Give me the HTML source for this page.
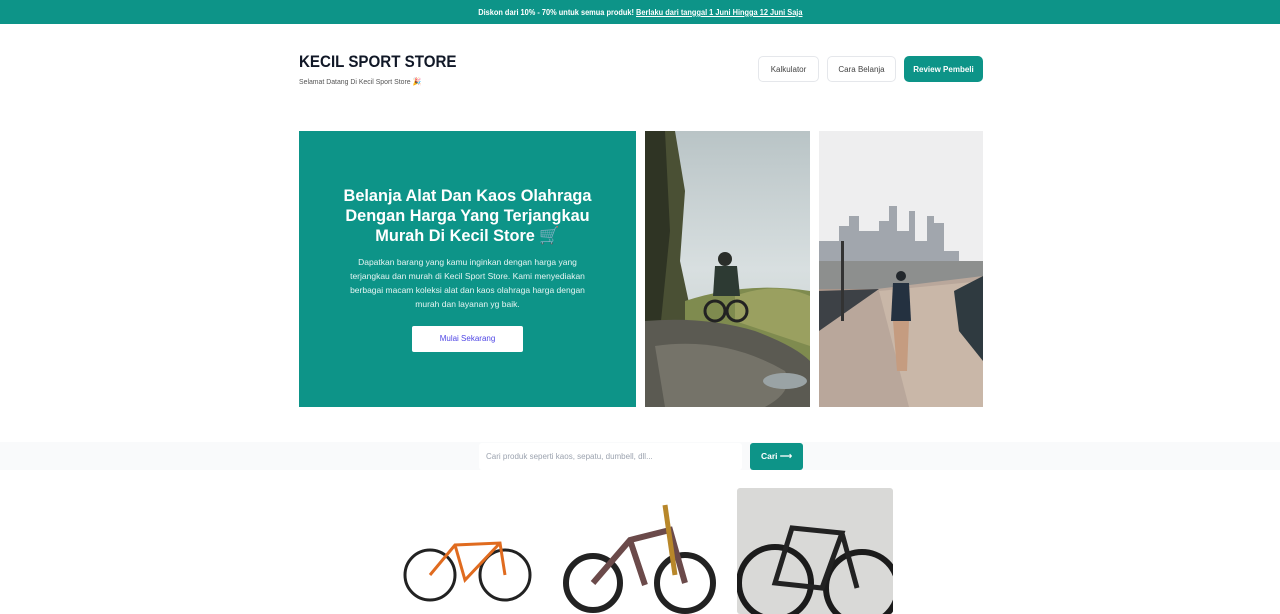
<!DOCTYPE html>
<html><head><meta charset="utf-8"><style>
*{margin:0;padding:0;box-sizing:border-box}
body{width:1280px;height:614px;overflow:hidden;background:#fff;font-family:"Liberation Sans",sans-serif;position:relative}
.top{height:24px;background:#0d9488;color:#fff;font-size:8.5px;font-weight:bold;text-align:center;line-height:24px}
.top span{display:inline-block;transform:scaleX(0.87)}
.top u{text-decoration:underline}
.abs{position:absolute}
h1{position:absolute;left:299px;top:52px;font-size:17px;font-weight:bold;color:#111827;transform:scaleX(0.89);transform-origin:left}
.sub{left:299px;top:77px;font-size:7.5px;color:#555;transform:scaleX(0.92);transform-origin:left}
.btn{position:absolute;top:56px;height:26px;border:1px solid #e5e7eb;border-radius:5px;font-size:8px;color:#444;display:flex;align-items:center;justify-content:center;background:#fff}
.hero{left:299px;top:131px;width:337px;height:276px;background:#0d9488;color:#fff;text-align:center}
.hero h2{font-size:17px;line-height:20px;font-weight:bold;margin-top:55px;padding:0 30px;transform:scaleX(0.96)}
.hero p{font-size:8.5px;line-height:14px;margin:9px 40px 0;color:#e6f5f3}
.hero .b{display:block;width:111px;height:26px;background:#fff;border-radius:2px;margin:15px auto 0;color:#4f46e5;font-size:8px;line-height:26px}
.sbar{left:0;top:442px;width:1280px;height:28px;background:#f9fafb}
</style></head><body>
<div class="top"><span>Diskon dari 10% - 70% untuk semua produk! <u>Berlaku dari tanggal 1 Juni Hingga 12 Juni Saja</u></span></div>
<h1>KECIL SPORT STORE</h1>
<div class="abs sub">Selamat Datang Di Kecil Sport Store 🎉</div>
<div class="btn" style="left:758px;width:61px">Kalkulator</div>
<div class="btn" style="left:827px;width:69px">Cara Belanja</div>
<div class="btn" style="left:904px;width:79px;background:#0d9488;border-color:#0d9488;color:#fff;font-weight:bold">Review Pembeli</div>
<div class="abs hero"><h2>Belanja Alat Dan Kaos Olahraga Dengan Harga Yang Terjangkau Murah Di Kecil Store 🛒</h2>
<p>Dapatkan barang yang kamu inginkan dengan harga yang terjangkau dan murah di Kecil Sport Store. Kami menyediakan berbagai macam koleksi alat dan kaos olahraga harga dengan murah dan layanan yg baik.</p>
<span class="b">Mulai Sekarang</span></div>
<svg class="abs" style="left:645px;top:131px" width="165" height="276" viewBox="0 0 165 276">
<defs><linearGradient id="s1" x1="0" y1="0" x2="0" y2="1"><stop offset="0" stop-color="#b9c4c6"/><stop offset=".5" stop-color="#d8dfe0"/><stop offset="1" stop-color="#c3cac8"/></linearGradient></defs>
<rect width="165" height="276" fill="url(#s1)"/>
<path d="M0 0H30L40 60 35 130 50 200H0Z" fill="#4a5034"/>
<path d="M0 0H20L25 100 15 200H0Z" fill="#2f3424"/>
<path d="M40 170Q100 150 165 160V230H40Z" fill="#7f8b4f"/>
<path d="M90 165Q130 150 165 165V215Q120 200 90 190Z" fill="#9aa060"/>
<path d="M0 190Q60 185 110 200 150 215 165 230V276H0Z" fill="#5b5a52"/>
<path d="M10 215Q80 205 140 240 150 260 120 276H20Z" fill="#757369"/>
<ellipse cx="140" cy="250" rx="22" ry="8" fill="#9aa3a5"/>
<circle cx="80" cy="128" r="7" fill="#2a2e2a"/><path d="M70 135H92L95 165H68Z" fill="#2d3a33"/>
<circle cx="70" cy="180" r="10" fill="none" stroke="#222" stroke-width="3"/><circle cx="92" cy="180" r="10" fill="none" stroke="#222" stroke-width="3"/>
</svg>
<svg class="abs" style="left:819px;top:131px" width="164" height="276" viewBox="0 0 164 276">
<rect width="164" height="276" fill="#eeeeef"/>
<path d="M0 110H20V95H30V85H40V100H60V90H70V75H78V100H90V80H96V110H108V85H115V92H125V120H140V140H0Z" fill="#a1a6ad"/>
<rect x="0" y="130" width="164" height="30" fill="#8d8f8e"/>
<path d="M0 158H164V276H0Z" fill="#a8958a"/>
<path d="M0 165L164 145V276H0Z" fill="#b9a79b"/>
<path d="M60 160L164 150V276H90Z" fill="#c9b7a8"/>
<path d="M0 160L60 158 0 200Z" fill="#3d4146"/>
<path d="M135 160L164 145V230L140 200Z" fill="#2f3a40"/>
<rect x="22" y="110" width="3" height="80" fill="#333"/>
<circle cx="82" cy="145" r="5" fill="#22272c"/><path d="M74 152H90L92 190H72Z" fill="#243140"/><path d="M74 190H90L88 240H78Z" fill="#c59c80"/>
</svg>
<div class="abs sbar"></div>
<div class="abs" style="left:479px;top:443px;width:263px;height:27px;background:#fff;border-radius:3px;font-size:8px;color:#9ca3af;line-height:27px;padding-left:7px">Cari produk seperti kaos, sepatu, dumbell, dll...</div>
<div class="abs" style="left:750px;top:443px;width:53px;height:27px;background:#0d9488;border-radius:3px;color:#fff;font-size:8.5px;font-weight:bold;line-height:27px;text-align:center">Cari ⟶</div>
<svg class="abs" style="left:400px;top:525px" width="135" height="85"><g fill="none" stroke="#222" stroke-width="3"><circle cx="30" cy="50" r="25"/><circle cx="105" cy="50" r="25"/></g><path d="M30 50L55 20 100 18 105 50M55 20L65 55 100 18" fill="none" stroke="#e06b1f" stroke-width="3"/></svg>
<svg class="abs" style="left:560px;top:500px" width="160" height="114"><g fill="none" stroke="#222" stroke-width="6"><circle cx="33" cy="83" r="27"/><circle cx="125" cy="83" r="28"/></g><path d="M33 83L70 40 110 30 125 83M70 40L85 85" fill="none" stroke="#6b4a4a" stroke-width="6"/><path d="M105 5L115 75" stroke="#b8872a" stroke-width="5"/></svg>
<div class="abs" style="left:737px;top:488px;width:156px;height:126px;background:#d9d9d7;border-radius:3px;overflow:hidden"><svg width="156" height="126"><g fill="none" stroke="#1b1b1b" stroke-width="6"><circle cx="38" cy="95" r="36"/><circle cx="125" cy="100" r="36"/></g><path d="M38 95L55 40 105 45 85 100ZM105 45L120 100" fill="none" stroke="#222" stroke-width="5"/></svg></div>
</body></html>
